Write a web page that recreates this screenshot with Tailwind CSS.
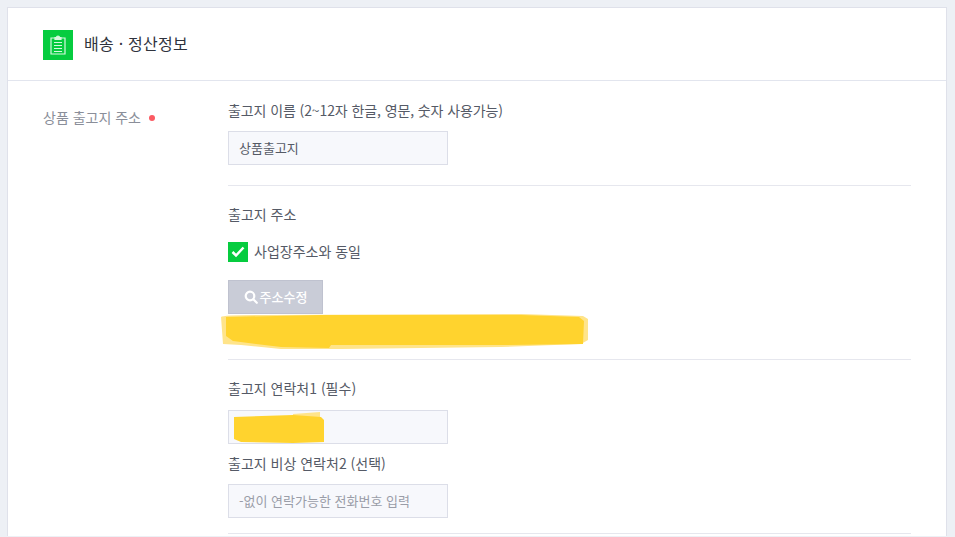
<!DOCTYPE html>
<html lang="ko">
<head>
<meta charset="utf-8">
<script src="https://cdn.jsdelivr.net/npm/@tailwindcss/browser@4"></script>
</head>
<body class="bg-[#edf0f5] h-[537px] overflow-hidden font-['Noto_Sans_CJK_KR','Liberation_Sans',sans-serif] text-[14px] text-[#555a66]">
<div class="mt-[7px] ml-[7px] w-[940px] h-[529px] overflow-hidden bg-white border border-[#dfe1ea] border-b-0">
  <div class="h-[73px] border-b border-[#e2e5ee] flex items-center pl-[35px] pt-[2px] gap-[11px]">
    <div class="w-[30px] h-[30px] bg-[#06cc3f] flex items-center justify-center">
      <svg width="16" height="20" viewBox="0 0 16 20" fill="none" stroke="#d8f7df" stroke-width="1.2">
        <path d="M5 3H1v16h14V3h-4"/>
        <path d="M5 3.500V2.500h1.500a1.500 1.500 0 0 1 3 0H11v2H5z" fill="#d8f7df"/>
        <path d="M4 7.500h8M4 10.500h8M4 13.500h8M4 16.500h8"/>
      </svg>
    </div>
    <span class="text-[16px] leading-[20px] mb-[5px] tracking-[0.25px] text-[#2f333d]">배송 · 정산정보</span>
  </div>
  <div class="flex pl-[35px] pr-[35px]">
    <div class="w-[185px] shrink-0 pt-[26px] flex items-start text-[#8a8e99]">
      <span class="leading-[20px]">상품 출고지 주소</span>
      <span class="w-[6px] h-[6px] rounded-full bg-[#fb5a62] ml-[8px] mt-[8px]"></span>
    </div>
    <div class="flex-1 relative">
      <div class="pt-[19px] pb-[20px] border-b border-[#e6e7ee]">
        <div class="leading-[20px] tracking-[-0.1px]">출고지 이름 (2~12자 한글, 영문, 숫자 사용가능)</div>
        <div class="mt-[11px] w-[220px] h-[34px] bg-[#f7f8fc] border border-[#dcdee8] pl-[10px] flex items-center text-[13px]">상품출고지</div>
      </div>
      <div class="pt-[18px] h-[174px] border-b border-[#e6e7ee] relative">
        <div class="leading-[20px]">출고지 주소</div>
        <div class="mt-[18px] flex items-center gap-[6px] h-[20px]">
          <span class="w-[20px] h-[20px] bg-[#06cc3f] flex items-center justify-center">
            <svg width="14" height="12" viewBox="0 0 14 12" fill="none" stroke="white" stroke-width="2.500"><path d="M1.500 6l3.500 3.500 7.500-8"/></svg>
          </span>
          <span class="leading-[20px] mb-[2px]">사업장주소와 동일</span>
        </div>
        <div class="mt-[18px] w-[95px] h-[34px] bg-[#c9ccd7] border border-[#bfc2cf] text-white text-[13px] font-medium flex items-center justify-center gap-[2px]">
          <svg width="14" height="14" viewBox="0 0 14 14" fill="none" stroke="white" stroke-width="2.200"><circle cx="6" cy="6" r="4.300"/><path d="M9.300 9.300l3.500 3.500" stroke-linecap="round"/></svg>
          주소수정
        </div>
        <svg class="absolute left-[-7px] top-[126px]" width="368" height="40" viewBox="0 0 368 40">
          <path d="M0 5 Q2 3 40 3 L300 2 L362 4 L367 7 L367 28 L360 32 L280 35 L120 37 L60 37 L20 33 L2 32Z" fill="#ffe48a"/>
          <path d="M5 5 L100 3 L300 3 L358 5 L363 9 L362 32 L280 33 L110 33 L108 36 L60 35 L12 29 L5 24Z" fill="#ffd32e"/>
        </svg>
      </div>
      <div class="pt-[18px] pb-[15px] border-b border-[#e6e7ee]">
        <div class="leading-[20px]">출고지 연락처1 (필수)</div>
        <div class="mt-[12px] relative w-[220px] h-[34px] bg-[#f7f8fc] border border-[#dcdee8]">
          <svg class="absolute left-[4px] top-[1px]" width="92" height="32" viewBox="0 0 92 32">
            <path d="M60 2 L87 0 L87 5 L60 5Z" fill="#ffe48a"/>
            <path d="M1 5 L60 3 L88 5 L91 8 L91 30 L60 31 L8 30 L1 27Z" fill="#ffd32e"/>
          </svg>
        </div>
        <div class="mt-[9px] leading-[20px]">출고지 비상 연락처2 (선택)</div>
        <div class="mt-[11px] w-[220px] h-[34px] bg-[#f7f8fc] border border-[#dcdee8] pl-[10px] flex items-center text-[13px] text-[#9a9da8]">-없이 연락가능한 전화번호 입력</div>
      </div>
    </div>
  </div>
</div>
</body>
</html>
